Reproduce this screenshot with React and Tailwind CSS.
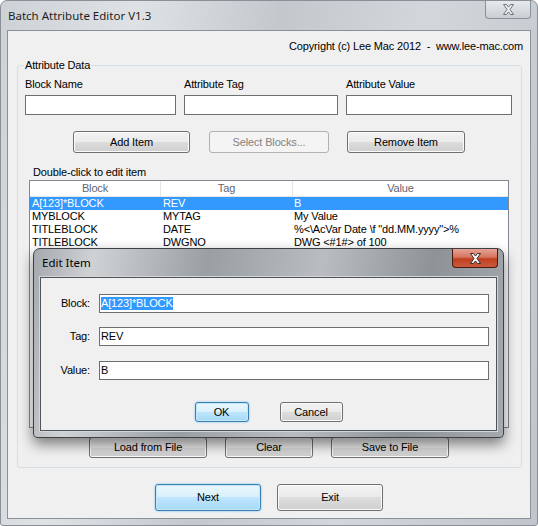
import React from 'react';

function CloseGlyph({ fill = '#ffffff', stroke = '#3b3b3b' }) {
  return (
    <svg width="13" height="11" viewBox="0 0 13 11">
      <path
        d="M1.5 0.5h3l2 2.6 2-2.6h3L8 5.5l3.5 5h-3l-2-2.6-2 2.6h-3L5 5.5z"
        fill={fill}
        stroke={stroke}
        strokeWidth="1"
        strokeLinejoin="round"
      />
    </svg>
  );
}

function Btn({ className = '', children, kind = 'normal' }) {
  const look =
    kind === 'default'
      ? 'border-[#3c7fb1] bg-[linear-gradient(to_bottom,#eaf6fd_0%,#d9f0fc_50%,#bee6fd_50%,#a7d9f5_100%)] shadow-[inset_0_0_0_1px_#c2e7fb,0_0_2px_#5fb6f0] text-black'
      : kind === 'disabled'
      ? 'border-[#adb2b5] bg-[#f4f4f4] text-[#838383]'
      : 'border-[#707070] bg-[linear-gradient(to_bottom,#f2f2f2_0%,#ebebeb_50%,#dddddd_50%,#cfcfcf_100%)] shadow-[inset_0_0_0_1px_#fbfbfb] text-black';
  return (
    <div className={`flex items-center justify-center rounded-[3px] border leading-[13px] ${look} ${className}`}>
      {children}
    </div>
  );
}

function Field({ className = '', children }) {
  return (
    <div className={`flex items-center border border-[#6e6e6e] bg-white pl-[1px] leading-[13px] ${className}`}>
      {children}
    </div>
  );
}

const rows = [
  ['A[123]*BLOCK', 'REV', 'B'],
  ['MYBLOCK', 'MYTAG', 'My Value'],
  ['TITLEBLOCK', 'DATE', '%<\\AcVar Date \\f "dd.MM.yyyy">%'],
  ['TITLEBLOCK', 'DWGNO', 'DWG <#1#> of 100'],
];

export default function App() {
  return (
    <div className="relative h-[526px] w-[538px] overflow-hidden rounded-t-[7px] rounded-b-[3px] border border-[#8a9096] bg-[linear-gradient(100deg,#cdd2d7_0%,#dfe2e5_22%,#c3c8cd_45%,#d3d7db_68%,#bfc5cb_100%)] font-['Liberation_Sans',Arial,sans-serif] text-[11px] tracking-[-0.15px] text-black">
      {/* Title bar */}
      <div className="flex h-[29px] items-start justify-between">
        <div className="flex h-full items-center pl-[7px] font-['Noto_Sans',sans-serif] text-[11.5px] tracking-normal text-[#1e1e1e]">
          Batch Attribute Editor V1.3
        </div>
        <div className="mr-[6px] flex h-[18px] w-[46px] items-center justify-center rounded-b-[4px] border border-t-0 border-[#8b9197] bg-[linear-gradient(to_bottom,#e7eaed_0%,#d9dde1_50%,#c9ced3_100%)]">
          <CloseGlyph fill="#eef0f2" stroke="#6d7278" />
        </div>
      </div>

      {/* Client area */}
      <div className="mx-[6px] flex h-[489px] flex-col border border-[#8b9197] bg-[#f0f0f0]">
        <div className="pr-[7px] pt-[9px] text-right leading-[13px]">
          Copyright (c) Lee Mac 2012&nbsp; - &nbsp;www.lee-mac.com
        </div>

        {/* Group box */}
        <div className="relative ml-[9px] mr-[8px] mt-[12px] rounded-[3px] border border-[#d5dfe5] pb-[9px]">
          <span className="absolute -top-[7px] left-[6px] bg-[#f0f0f0] px-[1px] leading-[13px]">Attribute Data</span>

          <div className="flex gap-2 pl-[7px] pt-[12px]">
            <div className="w-[151px]">
              <div className="mb-[4px] leading-[13px]">Block Name</div>
              <Field className="h-[20px]" />
            </div>
            <div className="w-[154px]">
              <div className="mb-[4px] leading-[13px]">Attribute Tag</div>
              <Field className="h-[20px]" />
            </div>
            <div className="w-[166px]">
              <div className="mb-[4px] leading-[13px]">Attribute Value</div>
              <Field className="h-[20px]" />
            </div>
          </div>

          <div className="mt-[16px] flex pl-[55px]">
            <Btn className="h-[22px] w-[117px]">Add Item</Btn>
            <Btn className="ml-[19px] h-[22px] w-[120px]" kind="disabled">Select Blocks...</Btn>
            <Btn className="ml-[18px] h-[22px] w-[118px]">Remove Item</Btn>
          </div>

          <div className="mt-[13px] pl-[15px] leading-[13px]">Double-click to edit item</div>

          {/* List view */}
          <div className="ml-[11px] mt-[1px] h-[248px] w-[480px] border border-[#828790] bg-white">
            <div className="flex h-[16px] border-b border-[#e5e5e5] text-[#5f6670]">
              <div className="flex w-[131px] items-center justify-center border-r border-[#e5e5e5]">Block</div>
              <div className="flex w-[132px] items-center justify-center border-r border-[#e5e5e5]">Tag</div>
              <div className="flex flex-1 items-center justify-center">Value</div>
            </div>
            {rows.map((r, i) => (
              <div
                key={i}
                className={`flex h-[13px] leading-[13px] ${i === 0 ? 'bg-[#3399ff] text-white' : 'text-black'}`}
              >
                <div className="w-[131px] pl-[2px]">{r[0]}</div>
                <div className="w-[132px] pl-[2px]">{r[1]}</div>
                <div className="flex-1 whitespace-nowrap pl-[1px]">{r[2]}</div>
              </div>
            ))}
          </div>

          <div className="mt-[9px] flex pl-[71px]">
            <Btn className="h-[21px] w-[118px]">Load from File</Btn>
            <Btn className="ml-[18px] h-[21px] w-[88px]">Clear</Btn>
            <Btn className="ml-[18px] h-[21px] w-[118px]">Save to File</Btn>
          </div>
        </div>

        <div className="mt-[16px] flex justify-center gap-4">
          <Btn className="h-[27px] w-[106px]" kind="default">Next</Btn>
          <Btn className="h-[27px] w-[106px]">Exit</Btn>
        </div>
      </div>

      {/* Edit Item dialog (overlay) */}
      <div className="absolute left-[32px] top-[247px] h-[190px] w-[471px] rounded-t-[7px] rounded-b-[4px] border border-[#3d4146] bg-[linear-gradient(100deg,#a4a9ae_0%,#cfd2d5_12%,#9a9fa4_35%,#b9bdc1_58%,#8e9398_80%,#a6aaae_100%)] shadow-[0_6px_14px_rgba(0,0,0,0.5)]">
        <div className="flex h-[28px] items-start justify-between">
          <div className="flex h-full items-center pl-[8px] font-['Noto_Sans',sans-serif] text-[11.5px] tracking-normal text-black">
            Edit Item
          </div>
          <div className="mr-[5px] flex h-[19px] w-[46px] items-center justify-center rounded-b-[4px] border border-t-0 border-[#4a1a10] bg-[linear-gradient(to_bottom,#e6a395_0%,#d5755e_45%,#c0401f_55%,#c95a3c_100%)]">
            <CloseGlyph fill="#ffffff" stroke="#3a2b2b" />
          </div>
        </div>

        <div className="mx-[6px] h-[154px] border border-[#4f5459] bg-[#f0f0f0] shadow-[0_0_0_1px_#d4d7da]">
          <div className="flex items-center gap-[9px] pt-[16px]">
            <div className="w-[49px] text-right leading-[13px]">Block:</div>
            <Field className="h-[19px] w-[390px]">
              <span className="bg-[#3399ff] text-white">A[123]*BLOCK</span>
            </Field>
          </div>
          <div className="mt-[14px] flex items-center gap-[9px]">
            <div className="w-[49px] text-right leading-[13px]">Tag:</div>
            <Field className="h-[19px] w-[390px]">REV</Field>
          </div>
          <div className="mt-[15px] flex items-center gap-[9px]">
            <div className="w-[49px] text-right leading-[13px]">Value:</div>
            <Field className="h-[19px] w-[390px]">B</Field>
          </div>
          <div className="mt-[22px] flex justify-center gap-[31px]">
            <Btn className="h-[20px] w-[54px]" kind="default">OK</Btn>
            <Btn className="h-[20px] w-[63px]">Cancel</Btn>
          </div>
        </div>
      </div>
    </div>
  );
}
